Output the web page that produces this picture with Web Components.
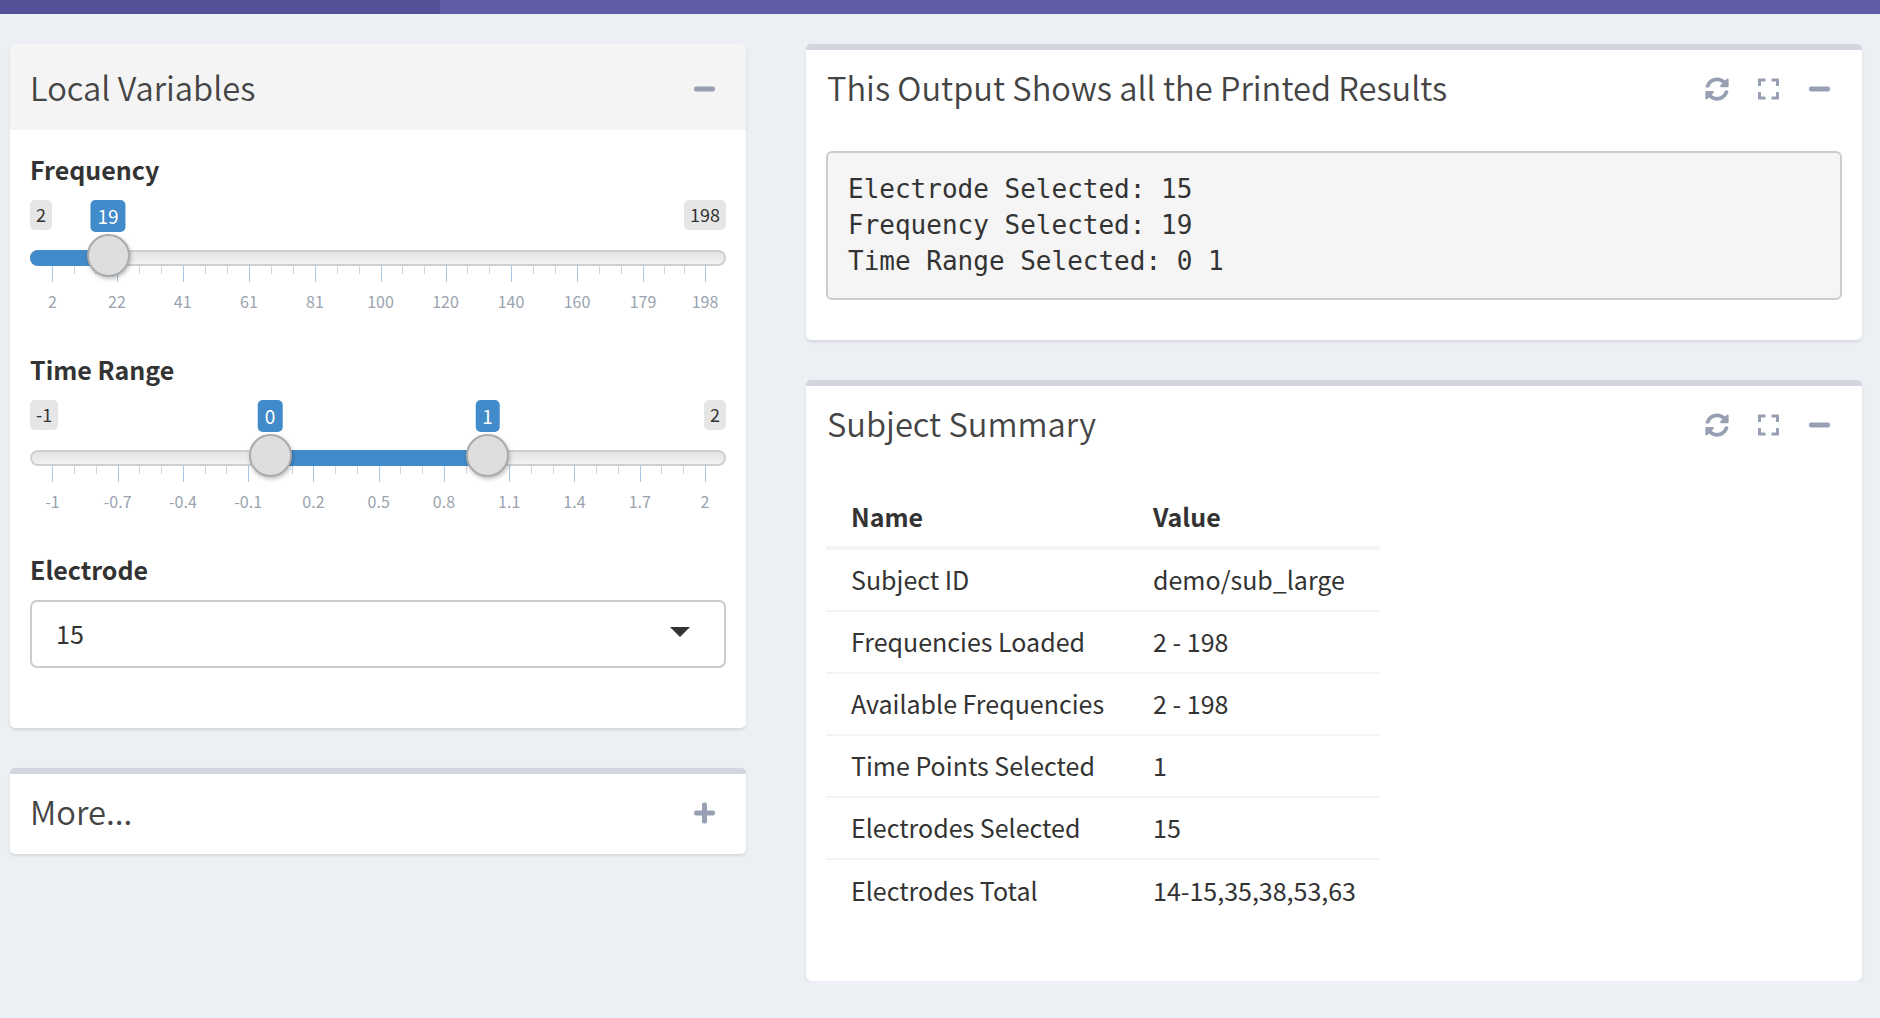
<!DOCTYPE html>
<html>
<head>
<meta charset="utf-8">
<title>Output</title>
<style>
  html, body { margin: 0; padding: 0; background: #ecf0f5; }
  body { font-family: "Noto Sans CJK SC", "Open Sans", sans-serif; color: #333; }
  .page { display: grid; grid-template-columns: 736px 1056px; column-gap: 60px; padding: 30px 0 0 10px; align-items: start; }
  .col { display: flex; flex-direction: column; gap: 40px; }
</style>
</head>
<body>
<top-bar></top-bar>
<div class="page">
  <div class="col">
    <box-card title="Local Variables" tint tool="minus" titleleft="20" pad="19px 20px 0 20px" height="684">
      <range-slider label="Frequency" min="2" max="198" from="19" at="78"
        xs="22.4,87,152.7,219,285,350.5,415.5,481,547,613,675"
        ticks="2,22,41,61,81,100,120,140,160,179,198"></range-slider>
      <range-slider label="Time Range" min="-1" max="2" from="0" to="1" at="240" at2="457.6"
        ticks="-1,-0.7,-0.4,-0.1,0.2,0.5,0.8,1.1,1.4,1.7,2"></range-slider>
      <select-box label="Electrode" value="15"></select-box>
    </box-card>
    <box-card title="More..." bar tool="plus" titleleft="20" height="86"></box-card>
  </div>
  <div class="col">
    <box-card title="This Output Shows all the Printed Results" bar tool="full" pad="0 20px 0 20px" height="296">
      <print-out>Electrode Selected: 15
Frequency Selected: 19
Time Range Selected: 0 1</print-out>
    </box-card>
    <box-card title="Subject Summary" bar tool="full" pad="0 0 0 20px" height="601">
      <summary-table></summary-table>
    </box-card>
  </div>
</div>

<script>
const ICONS = {
  refresh: '<svg width="24" height="24" viewBox="0 0 512 512"><path fill="currentColor" d="M370.72 133.28C339.458 104.008 298.888 87.962 255.848 88c-77.458.068-144.328 53.178-162.791 126.85-1.344 5.363-6.122 9.15-11.651 9.15H24.103c-7.498 0-13.194-6.807-11.807-14.176C33.933 94.924 134.813 8 256 8c66.448 0 126.791 26.136 171.315 68.685L463.03 40.97C478.149 25.851 504 36.559 504 57.941V192c0 13.255-10.745 24-24 24H345.941c-21.382 0-32.09-25.851-16.971-40.971l41.75-41.749zM32 296h134.059c21.382 0 32.09 25.851 16.971 40.971l-41.75 41.75c31.262 29.273 71.835 45.319 114.876 45.28 77.418-.07 144.315-53.144 162.787-126.849 1.344-5.363 6.122-9.15 11.651-9.15h57.304c7.498 0 13.194 6.807 11.807 14.176C478.067 417.076 377.187 504 256 504c-66.448 0-126.791-26.136-171.315-68.685L48.97 471.03C33.851 486.149 8 475.441 8 454.059V320c0-13.255 10.745-24 24-24z"/></svg>',
  expand: '<svg width="21" height="24" viewBox="0 0 448 512"><path fill="currentColor" d="M0 180V56c0-13.3 10.7-24 24-24h124c6.6 0 12 5.4 12 12v40c0 6.6-5.4 12-12 12H64v84c0 6.6-5.4 12-12 12H12c-6.6 0-12-5.4-12-12zM288 44v40c0 6.6 5.4 12 12 12h84v84c0 6.6 5.4 12 12 12h40c6.6 0 12-5.4 12-12V56c0-13.3-10.7-24-24-24H300c-6.6 0-12 5.4-12 12zm148 276h-40c-6.6 0-12 5.4-12 12v84h-84c-6.6 0-12 5.4-12 12v40c0 6.6 5.4 12 12 12h124c13.3 0 24-10.7 24-24V332c0-6.6-5.4-12-12-12zM160 468v-40c0-6.6-5.4-12-12-12H64v-84c0-6.6-5.4-12-12-12H12c-6.6 0-12 5.4-12 12v124c0 13.3 10.7 24 24 24h124c6.6 0 12-5.4 12-12z"/></svg>',
  minus: '<svg width="21" height="24" viewBox="0 0 21 24"><rect x="0" y="9.5" width="21" height="5" rx="2" fill="currentColor"/></svg>',
  plus: '<svg width="21" height="24" viewBox="0 0 21 24"><rect x="0" y="9.5" width="21" height="5" rx="2" fill="currentColor"/><rect x="8" y="1.5" width="5" height="21" rx="2" fill="currentColor"/></svg>'
};

class TopBar extends HTMLElement {
  constructor() {
    super();
    this.attachShadow({ mode: 'open' });
  }
  connectedCallback() {
    this.shadowRoot.innerHTML = `
      <style>
        :host { display: flex; height: 14px; background: #605ca8; }
        #logo { width: 440px; background: #555299; }
      </style>
      <div id="logo"></div>
    `;
  }
}

class BoxCard extends HTMLElement {
  constructor() {
    super();
    this.attachShadow({ mode: 'open' });
  }
  connectedCallback() {
    const tool = this.getAttribute('tool');
    let tools = ICONS[tool];
    if (tool === 'full') {
      tools = `<span class="t r">${ICONS.refresh}</span><span class="t e">${ICONS.expand}</span><span class="t">${ICONS.minus}</span>`;
    } else {
      tools = `<span class="t">${tools}</span>`;
    }
    const bar = this.hasAttribute('bar');
    const tint = this.hasAttribute('tint');
    this.shadowRoot.innerHTML = `
      <style>
        :host {
          display: block; box-sizing: border-box; background: #fff; border-radius: 5px;
          height: ${this.getAttribute('height')}px;
          border-top: ${bar ? '6px solid #d2d6de' : '0'};
          box-shadow: 0 2px 3px rgba(0,0,0,0.1);
        }
        #head {
          display: flex; align-items: center; justify-content: space-between;
          box-sizing: border-box; height: ${bar ? 74 : 86}px;
          padding: 0 ${tool === 'full' ? 32 : 31}px 0 ${this.getAttribute('titleleft') || 21}px;
          ${tint ? 'background: #f4f4f4; border-radius: 5px 5px 0 0;' : ''}
        }
        #title { font-size: 32.7px; color: #444; font-weight: 350; white-space: nowrap; margin-top: -1px; }
        #tools { display: flex; align-items: center; color: #97a0b3; margin-top: 3px; }
        .t { display: flex; }
        .r { margin-right: 29px; }
        .e { margin-right: 30px; }
        #body { padding: ${this.getAttribute('pad') || '0'}; }
      </style>
      <div id="head"><div id="title">${this.getAttribute('title')}</div><div id="tools">${tools}</div></div>
      <div id="body"><slot></slot></div>
    `;
  }
}

class RangeSlider extends HTMLElement {
  constructor() {
    super();
    this.attachShadow({ mode: 'open' });
  }
  connectedCallback() {
    const ticks = this.getAttribute('ticks').split(',');
    const at = parseFloat(this.getAttribute('at'));
    const at2 = this.hasAttribute('at2') ? parseFloat(this.getAttribute('at2')) : null;
    // tick spots, evenly spread unless the slider gives its own
    const xs = this.hasAttribute('xs')
      ? this.getAttribute('xs').split(',').map(Number)
      : ticks.map((t, i) => 22.4 + 65.26 * i);
    let marks = '';
    ticks.forEach((t, i) => {
      const x = xs[i];
      marks += `<i class="major" style="left:${x}px"></i><span class="num" style="left:${x}px">${t}</span>`;
      if (i < ticks.length - 1) {
        const step = xs[i + 1] - x;
        marks += `<i class="minor" style="left:${x + step / 3}px"></i><i class="minor" style="left:${x + step * 2 / 3}px"></i>`;
      }
    });
    const fill = at2 === null
      ? `<div class="fill" style="left:0;width:${at}px;border-radius:8px 0 0 8px"></div>`
      : `<div class="fill" style="left:${at}px;width:${at2 - at}px"></div>`;
    const bubble = x => `<div class="cur" style="left:${x}px">${x === at ? this.getAttribute('from') : this.getAttribute('to')}</div><div class="thumb" style="left:${x}px"></div>`;
    this.shadowRoot.innerHTML = `
      <style>
        :host { display: block; height: 200px; }
        #label { font-size: 25px; font-weight: 700; color: #333; line-height: 40px; height: 44px; }
        #rail { position: relative; height: 156px; width: 696px; }
        .edge, .cur {
          position: absolute; top: 7px; height: 30px; line-height: 28px; padding: 0 6px;
          font-size: 18px; border-radius: 5px; background: #e6e6e6; color: #333; white-space: nowrap;
        }
        .edge.min { left: 0; }
        .edge.max { right: 0; }
        .cur { height: 32px; line-height: 32px; transform: translateX(-50%); background: #428bca; color: #fff; padding: 0 7px; font-size: 19px; }
        #track {
          position: absolute; left: 0; right: 0; top: 57px; height: 16px; box-sizing: border-box;
          border: 2px solid #cfcfcf; border-radius: 8px;
          background: linear-gradient(#e4e4e4, #f2f2f2);
        }
        .fill { position: absolute; top: 57px; height: 16px; background: #428bca; }
        .thumb {
          position: absolute; top: 41px; width: 43px; height: 43px; box-sizing: border-box; margin-left: -21.5px;
          border-radius: 50%; background: #dedede; border: 2px solid #ababab;
          box-shadow: 1px 2px 4px rgba(0,0,0,0.25); z-index: 2;
        }
        i { position: absolute; top: 73px; width: 1px; }
        .major { height: 16px; background: #a5c8e6; }
        .minor { height: 8px; background: #d4d4d4; }
        .num {
          position: absolute; top: 96px; transform: translateX(-50%); font-size: 16px; line-height: 24px;
          color: #9aa3ae; white-space: nowrap;
        }
      </style>
      <div id="label">${this.getAttribute('label')}</div>
      <div id="rail">
        <div class="edge min">${this.getAttribute('min')}</div>
        <div class="edge max">${this.getAttribute('max')}</div>
        <div id="track"></div>
        ${fill}
        ${marks}
        ${bubble(at)}
        ${at2 === null ? '' : bubble(at2)}
      </div>
    `;
  }
}

class SelectBox extends HTMLElement {
  constructor() {
    super();
    this.attachShadow({ mode: 'open' });
  }
  connectedCallback() {
    this.shadowRoot.innerHTML = `
      <style>
        :host { display: block; }
        #label { font-size: 25px; font-weight: 700; color: #333; line-height: 40px; height: 44px; margin-bottom: 7px; }
        #field {
          display: flex; align-items: center; justify-content: space-between; box-sizing: border-box;
          width: 696px; height: 68px; border: 2px solid #ccc; border-radius: 7px; padding: 0 34px 0 24px;
          font-size: 25px; color: #333;
        }
        #field span:first-child { margin-top: -2px; }
        #arrow { width: 0; height: 0; border-left: 10px solid transparent; border-right: 10px solid transparent; border-top: 10px solid #333; margin-top: -4px; }
      </style>
      <div id="label">${this.getAttribute('label')}</div>
      <div id="field"><span>${this.getAttribute('value')}</span><span id="arrow"></span></div>
    `;
  }
}

class PrintOut extends HTMLElement {
  constructor() {
    super();
    this.attachShadow({ mode: 'open' });
  }
  connectedCallback() {
    this.shadowRoot.innerHTML = `
      <style>
        :host {
          display: block; box-sizing: border-box; height: 149px; margin-top: 27px;
          background: #f5f5f5; border: 2px solid #ccc; border-radius: 6px; padding: 18px 20px;
          font-family: "DejaVu Sans Mono", monospace; font-size: 26px; line-height: 36px; color: #333;
        }
        #text { white-space: pre; }
      </style>
      <div id="text"><slot></slot></div>
    `;
  }
}

class SummaryTable extends HTMLElement {
  constructor() {
    super();
    this.attachShadow({ mode: 'open' });
  }
  connectedCallback() {
    const rows = [
      ['Subject ID', 'demo/sub_large'],
      ['Frequencies Loaded', '2 - 198'],
      ['Available Frequencies', '2 - 198'],
      ['Time Points Selected', '1'],
      ['Electrodes Selected', '15'],
      ['Electrodes Total', '14-15,35,38,53,63']
    ];
    this.shadowRoot.innerHTML = `
      <style>
        :host { display: block; width: 554px; margin-top: 26px; font-size: 25px; color: #333; }
        .row { display: grid; grid-template-columns: 302px 1fr; padding-left: 25px; padding-bottom: 2px; height: 62px; align-items: center; box-sizing: border-box; border-bottom: 2px solid #f4f4f4; }
        .row:last-child { border-bottom: 0; }
        .row.head { height: 64px; padding-bottom: 0; font-weight: 700; border-bottom: 4px solid #f4f4f4; }
      </style>
      <div class="row head"><span>Name</span><span>Value</span></div>
      ${rows.map(r => `<div class="row"><span>${r[0]}</span><span>${r[1]}</span></div>`).join('')}
    `;
  }
}

customElements.define('top-bar', TopBar);
customElements.define('box-card', BoxCard);
customElements.define('range-slider', RangeSlider);
customElements.define('select-box', SelectBox);
customElements.define('print-out', PrintOut);
customElements.define('summary-table', SummaryTable);
</script>
</body>
</html>
